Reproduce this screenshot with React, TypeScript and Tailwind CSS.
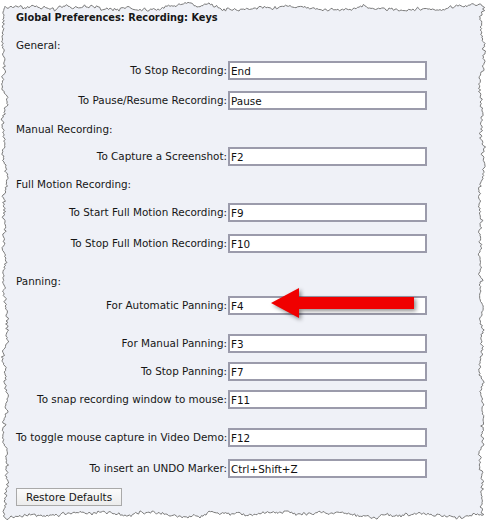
import React from 'react'

// torn paper edge, drawn once from a fixed seed
function makeSeed(seed: number) {
  let s = seed
  return () => {
    s = (s * 1103515245 + 12345) % 2147483648
    return s / 2147483648
  }
}

function tornPath() {
  const rnd = makeSeed(42)
  const pts: [number, number][] = []
  const walk = (x0: number, y0: number, x1: number, y1: number, amp: number, nx: number, ny: number) => {
    const len = Math.hypot(x1 - x0, y1 - y0)
    const steps = Math.floor(len / 1.5)
    let off = 0
    for (let i = 0; i < steps; i++) {
      const t = i / steps
      off += (rnd() - 0.5) * 2.6
      if (off > amp) off = amp
      if (off < -amp) off = -amp
      const jit = (rnd() - 0.5) * 2.4
      pts.push([x0 + (x1 - x0) * t + nx * (off + jit), y0 + (y1 - y0) * t + ny * (off + jit)])
    }
  }
  walk(5, 6, 482, 6, 4, 0, 1)
  walk(482, 6, 482, 516, 2.5, 1, 0)
  walk(482, 516, 5, 516, 4, 0, 1)
  walk(5, 516, 5, 6, 2.5, 1, 0)
  return 'M' + pts.map((p) => p[0].toFixed(1) + ',' + p[1].toFixed(1)).join(' L') + ' Z'
}

const edgePath = tornPath()

type RowProps = { label: string; value: string; mt: string }

const KeyRow = ({ label, value, mt }: RowProps) => (
  <div className={'flex items-center h-[19px] ' + mt}>
    <div className="w-[211px] text-right whitespace-nowrap">{label}</div>
    <input
      readOnly
      value={value}
      className="ml-[1px] w-[199px] h-[19px] border-2 border-[#9b9bab] bg-white pl-[1px] text-[#111] outline-none"
    />
  </div>
)

const Heading = ({ text, mt }: { text: string; mt: string }) => (
  <div className={'h-[14px] leading-[14px] ' + mt}>{text}</div>
)

export default function App() {
  return (
    <div className="relative w-[488px] h-[525px] bg-white text-[10.4px] text-[#161616] font-['DejaVu_Sans',sans-serif]">
      <svg className="absolute inset-0" width="488" height="525" viewBox="0 0 488 525">
        <path d={edgePath} fill="#eff1f7" stroke="#7c7c7c" strokeWidth="1" />
      </svg>

      <div className="relative flex flex-col pl-[16px]">
        <div className="mt-[10px] h-[16px] leading-[16px] font-bold text-[9.8px]">Global Preferences: Recording: Keys</div>

        <Heading text="General:" mt="mt-[12px]" />
        <KeyRow label="To Stop Recording:" value="End" mt="mt-[9px]" />
        <KeyRow label="To Pause/Resume Recording:" value="Pause" mt="mt-[11px]" />

        <Heading text="Manual Recording:" mt="mt-[12px]" />
        <KeyRow label="To Capture a Screenshot:" value="F2" mt="mt-[11px]" />

        <Heading text="Full Motion Recording:" mt="mt-[11px]" />
        <KeyRow label="To Start Full Motion Recording:" value="F9" mt="mt-[12px]" />
        <KeyRow label="To Stop Full Motion Recording:" value="F10" mt="mt-[12px]" />

        <Heading text="Panning:" mt="mt-[21px]" />
        <KeyRow label="For Automatic Panning:" value="F4" mt="mt-[8px]" />
        <KeyRow label="For Manual Panning:" value="F3" mt="mt-[19px]" />
        <KeyRow label="To Stop Panning:" value="F7" mt="mt-[9px]" />
        <KeyRow label="To snap recording window to mouse:" value="F11" mt="mt-[9px]" />
        <KeyRow label="To toggle mouse capture in Video Demo:" value="F12" mt="mt-[19px]" />
        <KeyRow label="To insert an UNDO Marker:" value="Ctrl+Shift+Z" mt="mt-[12px]" />

        <div className="mt-[10px]">
          <button className="w-[106px] h-[18px] border border-[#a9a9a9] bg-gradient-to-b from-[#fbfbfb] to-[#ececec] leading-[16px]">
            Restore Defaults
          </button>
        </div>
      </div>

      {/* red callout arrow */}
      <svg className="absolute left-[266px] top-[284px] drop-shadow-[2px_2px_2px_rgba(0,0,0,0.45)]" width="156" height="40" viewBox="0 0 156 40">
        <polygon points="5,19 33,4 33,13 148,13 148,25 33,25 33,34" fill="#f00000" />
      </svg>
    </div>
  )
}
